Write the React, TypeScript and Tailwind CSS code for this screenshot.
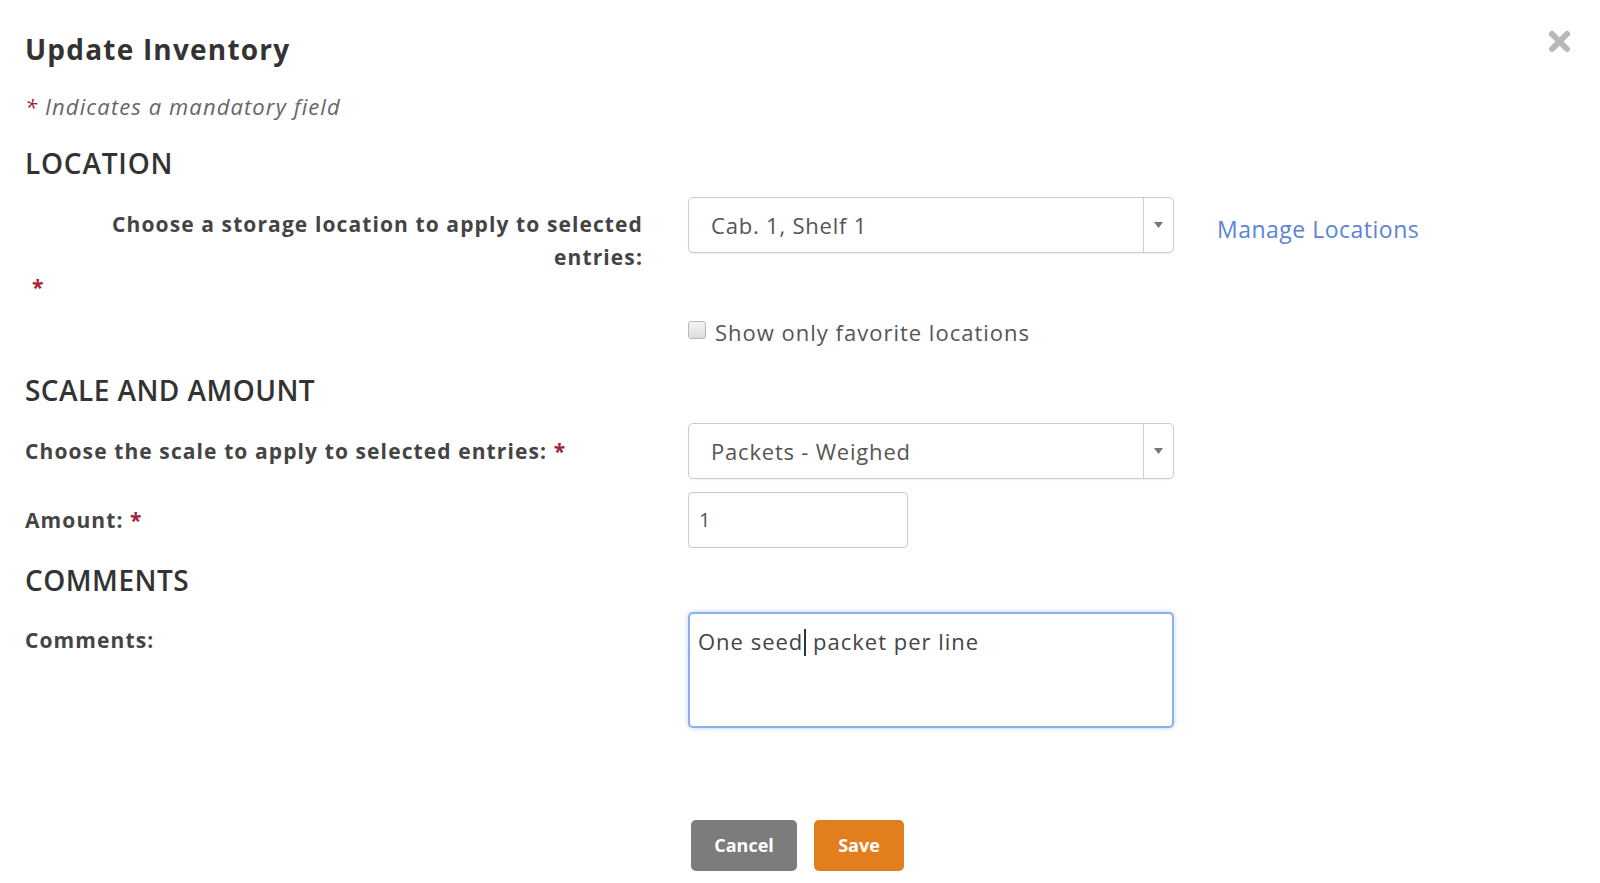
import React from "react";

function Star() {
  return <span className="text-[#a3213a]">*</span>;
}

function SelectBox({ value }: { value: string }) {
  return (
    <div className="flex h-[56px] w-[486px] rounded-[5px] border border-[#cbcbcb] bg-white shadow-[0_1px_2px_rgba(0,0,0,0.06)]">
      <div className="flex-1 pl-[22px] text-[22px] leading-[54px] tracking-[0.8px] text-[#555]">{value}</div>
      <div className="flex w-[30px] items-center justify-center border-l border-[#d0d0d0]">
        <svg width="9" height="6" viewBox="0 0 9 6">
          <path d="M0 0 L9 0 L4.5 6 Z" fill="#777" />
        </svg>
      </div>
    </div>
  );
}

export default function App() {
  return (
    <div className="relative h-[883px] w-[1600px] overflow-hidden bg-white pl-[25px] pt-[29px] font-['Open_Sans',sans-serif] text-[#333]">
      <button className="absolute left-[1547px] top-[29px] h-[25px] w-[25px]" aria-label="close">
        <svg width="25" height="25" viewBox="0 0 25 25">
          <path d="M5 5 L20 20 M20 5 L5 20" stroke="#b8b8b8" strokeWidth="6" strokeLinecap="round" />
        </svg>
      </button>

      <h1 className="text-[28px] font-bold leading-[40px] tracking-[1.2px] text-[#333]">Update Inventory</h1>
      <p className="mt-[22px] text-[22px] italic leading-[30px] tracking-[1.1px] text-[#666]">
        <Star /> Indicates a mandatory field
      </p>

      <h2 className="mt-[22px] text-[28px] font-semibold leading-[40px] tracking-[0.8px] text-[#333]">LOCATION</h2>
      <div className="mt-[14px] flex">
        <div className="w-[618px] pt-[11px] text-right text-[21px] font-bold leading-[33px] tracking-[1.1px] text-[#444]">
          Choose a storage location to apply to selected
          <br />
          entries:
          <div className="-mt-[3px] pl-[7px] text-left">
            <Star />
          </div>
        </div>
        <div className="ml-[45px] flex flex-col">
          <div className="flex items-start">
            <SelectBox value="Cab. 1, Shelf 1" />
            <a className="ml-[43px] mt-[16px] text-[23px] leading-[32px] tracking-[0.5px] text-[#5b84d4]">Manage Locations</a>
          </div>
          <label className="mt-[64px] flex items-start text-[22px] leading-[30px] tracking-[1px] text-[#555]">
            <span className="mt-[4px] h-[18px] w-[18px] rounded-[3px] border border-[#b9b9b9] bg-gradient-to-b from-[#f4f4f4] to-[#dcdcdc]" />
            <span className="ml-[9px]">Show only favorite locations</span>
          </label>
        </div>
      </div>

      <h2 className="mt-[23px] text-[28px] font-semibold leading-[40px] tracking-[0.45px] text-[#333]">SCALE AND AMOUNT</h2>
      <div className="mt-[13px] flex">
        <div className="w-[618px] text-[21px] font-bold leading-[56px] tracking-[1.1px] text-[#444]">
          Choose the scale to apply to selected entries: <Star />
        </div>
        <div className="ml-[45px]">
          <SelectBox value="Packets - Weighed" />
        </div>
      </div>
      <div className="mt-[13px] flex">
        <div className="w-[618px] text-[21px] font-bold leading-[56px] tracking-[1.1px] text-[#444]">
          Amount: <Star />
        </div>
        <div className="ml-[45px]">
          <div className="h-[56px] w-[220px] rounded-[4px] border border-[#cbcbcb] bg-white pl-[10px] text-[20px] leading-[54px] text-[#555]">
            1
          </div>
        </div>
      </div>

      <h2 className="mt-[12px] text-[28px] font-semibold leading-[40px] tracking-[0.5px] text-[#333]">COMMENTS</h2>
      <div className="mt-[12px] flex">
        <div className="w-[618px] pt-[13px] text-[21px] font-bold leading-[30px] tracking-[1.1px] text-[#444]">Comments:</div>
        <div className="ml-[45px]">
          <div className="h-[116px] w-[486px] rounded-[5px] border-2 border-[#8db0ea] bg-white px-[8px] pt-[9px] text-[22px] leading-[30px] tracking-[1px] text-[#444] shadow-[0_0_5px_rgba(102,150,230,0.45)]">
            One seed
            <span className="ml-[1px] inline-block h-[27px] w-[2px] translate-y-[6px] bg-[#333]" /> packet per line
          </div>
        </div>
      </div>

      <div className="ml-[666px] mt-[92px] flex gap-[17px]">
        <button className="h-[51px] w-[106px] rounded-[5px] bg-[#7c7c7c] text-[18px] font-bold text-white">
          Cancel
        </button>
        <button className="h-[51px] w-[90px] rounded-[5px] bg-[#e37e1f] text-[18px] font-bold text-white">
          Save
        </button>
      </div>
    </div>
  );
}
